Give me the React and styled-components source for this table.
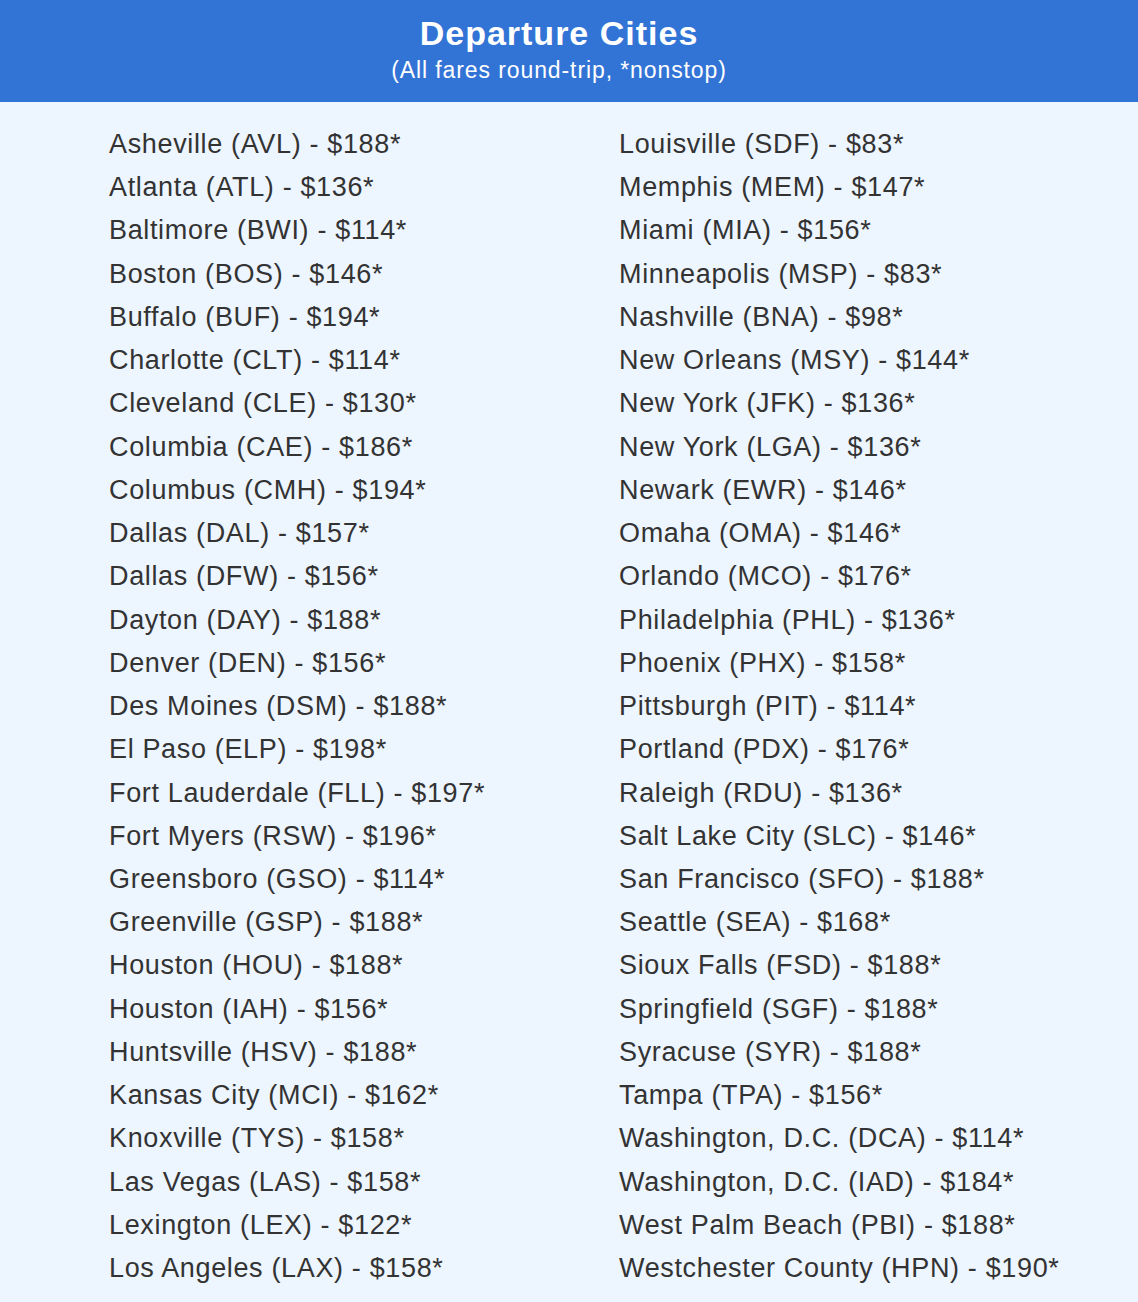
import styled, { createGlobalStyle } from "styled-components";

const GlobalStyle = createGlobalStyle`
  body {
    margin: 0;
    background: #edf5ff;
    font-family: "Liberation Sans", Arial, sans-serif;
  }
`;

const Header = styled.header`
  background: #3273d6;
  color: #fff;
  text-align: center;
  height: 102px;
  box-sizing: border-box;
  padding: 12px 20px 0 0;
`;

const Title = styled.h1`
  margin: 0;
  font-size: 34px;
  font-weight: 700;
  letter-spacing: 1px;
  line-height: 42px;
`;

const Subtitle = styled.div`
  font-size: 23px;
  letter-spacing: 0.9px;
  line-height: 32px;
`;

const List = styled.div`
  display: grid;
  grid-template-columns: 510px 1fr;
  padding: 21px 0 12px 109px;
  background: #edf5ff;
`;

const Column = styled.ul`
  list-style: none;
  margin: 0;
  padding: 0;
`;

const Item = styled.li`
  font-size: 27px;
  letter-spacing: 0.65px;
  line-height: 43.23px;
  color: #333333;
  white-space: nowrap;
`;

const left = [
  "Asheville (AVL) - $188*",
  "Atlanta (ATL) - $136*",
  "Baltimore (BWI) - $114*",
  "Boston (BOS) - $146*",
  "Buffalo (BUF) - $194*",
  "Charlotte (CLT) - $114*",
  "Cleveland (CLE) - $130*",
  "Columbia (CAE) - $186*",
  "Columbus (CMH) - $194*",
  "Dallas (DAL) - $157*",
  "Dallas (DFW) - $156*",
  "Dayton (DAY) - $188*",
  "Denver (DEN) - $156*",
  "Des Moines (DSM) - $188*",
  "El Paso (ELP) - $198*",
  "Fort Lauderdale (FLL) - $197*",
  "Fort Myers (RSW) - $196*",
  "Greensboro (GSO) - $114*",
  "Greenville (GSP) - $188*",
  "Houston (HOU) - $188*",
  "Houston (IAH) - $156*",
  "Huntsville (HSV) - $188*",
  "Kansas City (MCI) - $162*",
  "Knoxville (TYS) - $158*",
  "Las Vegas (LAS) - $158*",
  "Lexington (LEX) - $122*",
  "Los Angeles (LAX) - $158*",
];

const right = [
  "Louisville (SDF) - $83*",
  "Memphis (MEM) - $147*",
  "Miami (MIA) - $156*",
  "Minneapolis (MSP) - $83*",
  "Nashville (BNA) - $98*",
  "New Orleans (MSY) - $144*",
  "New York (JFK) - $136*",
  "New York (LGA) - $136*",
  "Newark (EWR) - $146*",
  "Omaha (OMA) - $146*",
  "Orlando (MCO) - $176*",
  "Philadelphia (PHL) - $136*",
  "Phoenix (PHX) - $158*",
  "Pittsburgh (PIT) - $114*",
  "Portland (PDX) - $176*",
  "Raleigh (RDU) - $136*",
  "Salt Lake City (SLC) - $146*",
  "San Francisco (SFO) - $188*",
  "Seattle (SEA) - $168*",
  "Sioux Falls (FSD) - $188*",
  "Springfield (SGF) - $188*",
  "Syracuse (SYR) - $188*",
  "Tampa (TPA) - $156*",
  "Washington, D.C. (DCA) - $114*",
  "Washington, D.C. (IAD) - $184*",
  "West Palm Beach (PBI) - $188*",
  "Westchester County (HPN) - $190*",
];

export default function App() {
  return (
    <>
      <GlobalStyle />
      <Header>
        <Title>Departure Cities</Title>
        <Subtitle>(All fares round-trip, *nonstop)</Subtitle>
      </Header>
      <List>
        <Column>
          {left.map((c) => (
            <Item key={c}>{c}</Item>
          ))}
        </Column>
        <Column>
          {right.map((c) => (
            <Item key={c}>{c}</Item>
          ))}
        </Column>
      </List>
    </>
  );
}
